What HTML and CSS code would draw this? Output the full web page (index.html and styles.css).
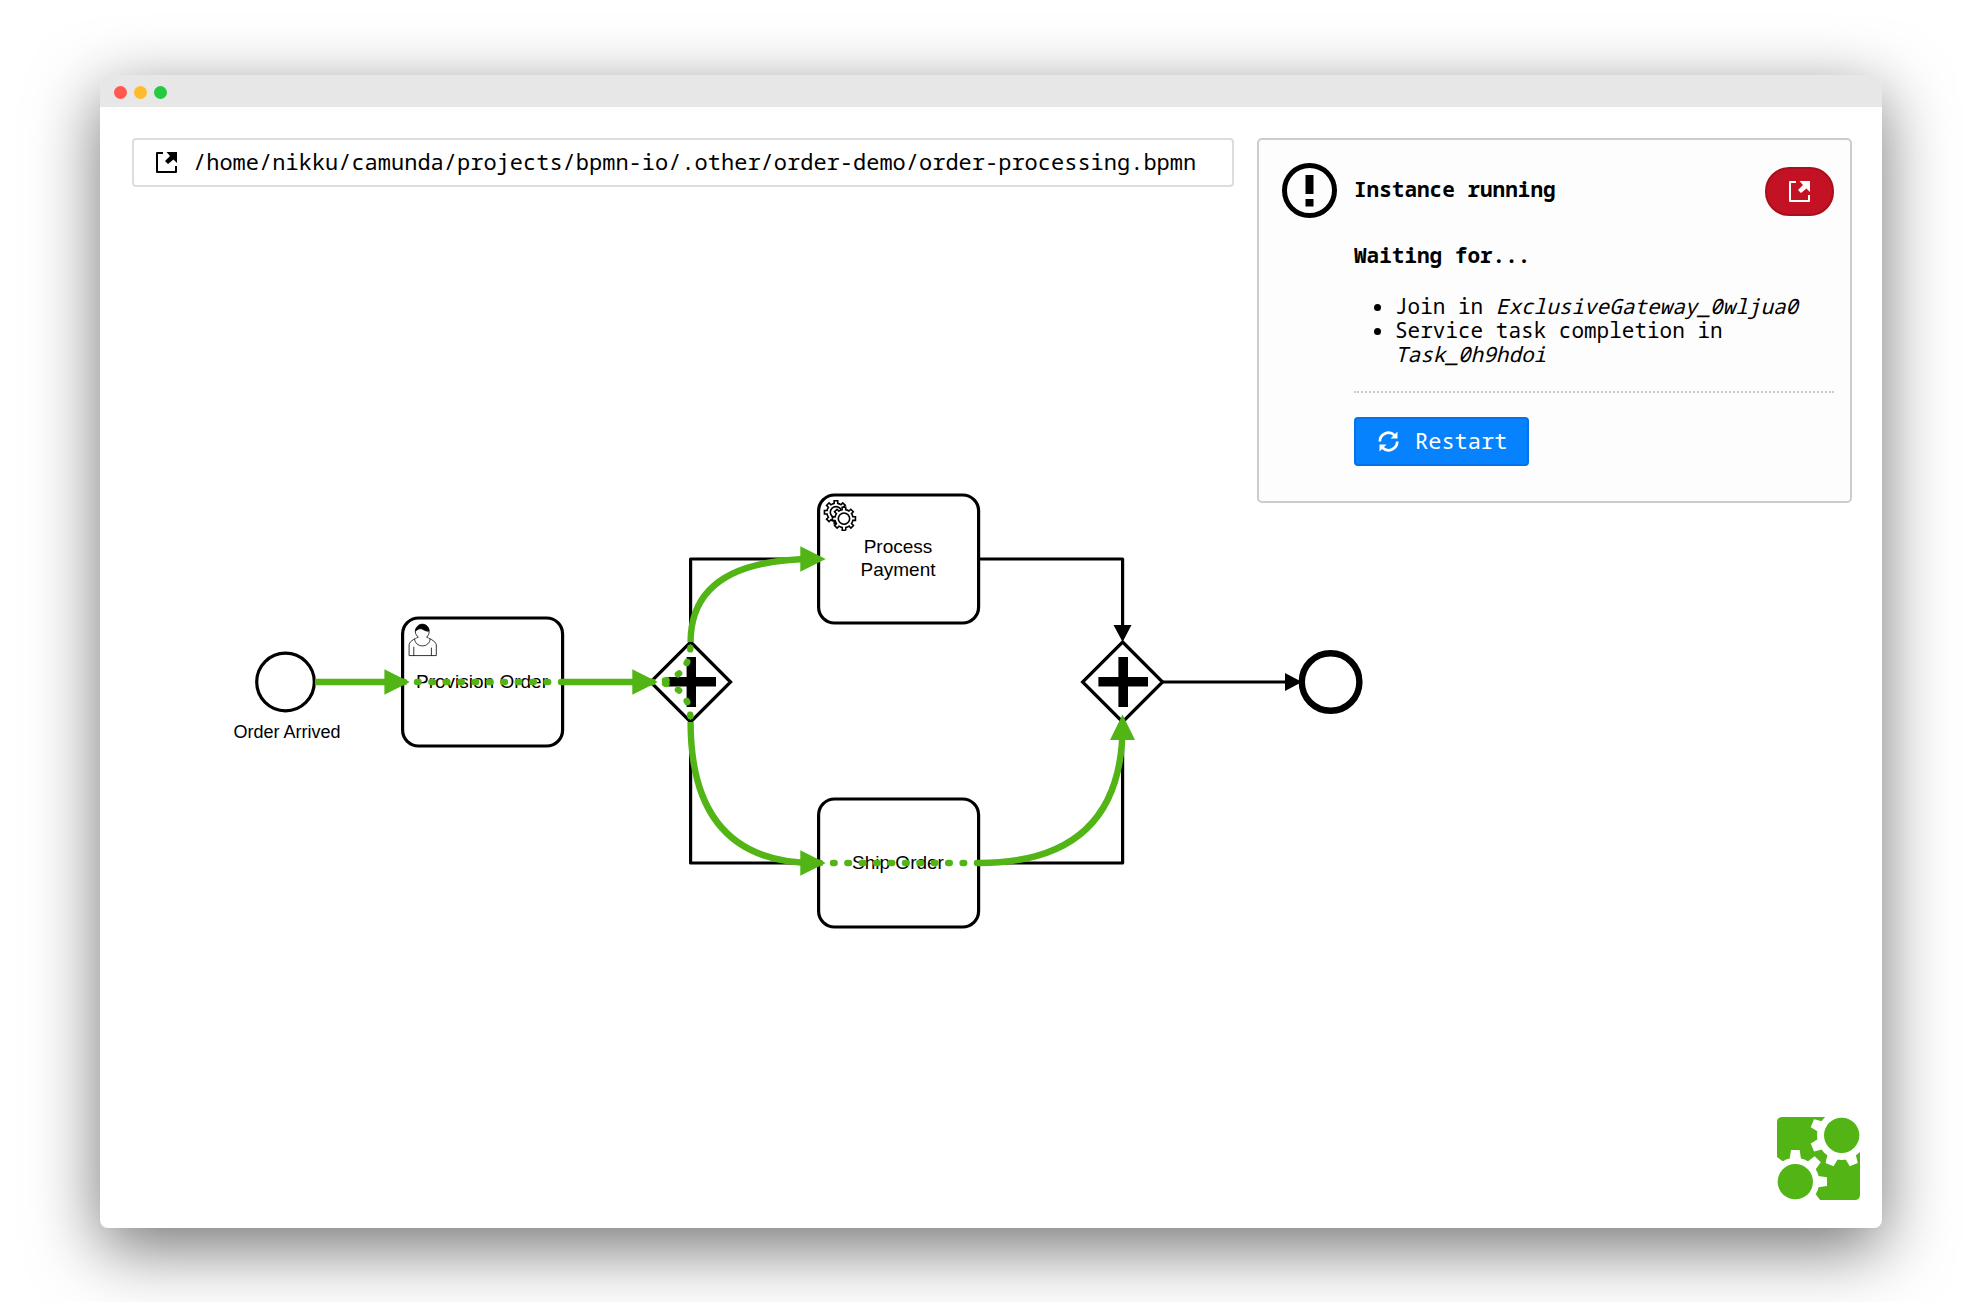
FILE: index.html
```html
<!DOCTYPE html>
<html lang="en">
<head>
<meta charset="utf-8">
<title>Order processing</title>
<link rel="stylesheet" href="styles.css">
</head>
<body>
<svg class="defs" aria-hidden="true">
  <symbol id="external" viewBox="0 0 21 21">
    <path d="M7 1H1V20H20V14" fill="none" stroke="currentColor" stroke-width="2" stroke-linejoin="round"/>
    <path d="M10.500 0H21V11L17.500 7.500L12 12L9 9L14 4Z" fill="currentColor"/>
  </symbol>
</svg>
<div class="window">
  <header class="titlebar">
    <span class="dot close"></span><span class="dot minimize"></span><span class="dot maximize"></span>
  </header>
  <main class="workspace">
    <svg class="diagram" viewBox="100 107 1782 1121" preserveAspectRatio="xMinYMin meet" role="img" aria-label="Order process">
      <defs>
        <path id="gear" d="m 12,18 v -1.71335 c 0.352326,-0.0705 0.703932,-0.17838 1.047628,-0.32133 0.344416,-0.14465 0.665822,-0.32133 0.966377,-0.52145 l 1.19431,1.18005 1.567487,-1.57688 -1.195028,-1.18014 c 0.403376,-0.61394 0.683079,-1.29908 0.825447,-2.01824 l 1.622133,-0.01 v -2.2196 l -1.636514,0.01 c -0.07333,-0.35153 -0.178319,-0.70024 -0.323564,-1.04372 -0.145244,-0.34406 -0.321407,-0.6644 -0.522735,-0.96217 l 1.131035,-1.13631 -1.583305,-1.56293 -1.129598,1.13589 c -0.614052,-0.40108 -1.302883,-0.68093 -2.022633,-0.82247 l 0.0093,-1.61852 h -2.241173 l 0.0042,1.63124 c -0.353763,0.0736 -0.705369,0.17977 -1.049785,0.32371 -0.344415,0.14437 -0.665102,0.32092 -0.9635006,0.52046 l -1.1698628,-1.15823 -1.5667691,1.5792 1.1684265,1.15669 c -0.4026573,0.61283 -0.68308,1.29797 -0.8247287,2.01713 l -1.6588041,0.003 v 2.22174 l 1.6724648,-0.006 c 0.073327,0.35077 0.1797598,0.70243 0.3242851,1.04472 0.1452428,0.34448 0.3214064,0.6644 0.5227339,0.96066 l -1.1993431,1.19723 1.5840256,1.56011 1.1964668,-1.19348 c 0.6140517,0.40346 1.3028827,0.68232 2.0233517,0.82331 l 7.19e-4,1.69892 h 2.226848 z m 0.221462,-3.9957 c -1.788948,0.7502 -3.8576,-0.0928 -4.6097055,-1.87438 -0.7521065,-1.78321 0.090598,-3.84627 1.8802645,-4.59604 1.78823,-0.74936 3.856881,0.0929 4.608987,1.87437 0.752106,1.78165 -0.0906,3.84612 -1.879546,4.59605 z"/>
      </defs>

      <g class="shape">
        <circle cx="285.500" cy="682" r="28.800"/>
        <rect x="402.600" y="618" width="160" height="128" rx="16"/>
        <rect x="818.600" y="495" width="160" height="128" rx="16"/>
        <rect x="818.600" y="799" width="160" height="128" rx="16"/>
        <path d="M690.600 642L730.600 682L690.600 722L650.600 682Z"/>
        <path d="M1122.600 642L1162.600 682L1122.600 722L1082.600 682Z"/>
        <circle class="end" cx="1330.600" cy="682" r="28.800"/>
      </g>
      <g class="flow">
        <path d="M690.600 642V559H818"/>
        <path d="M690.600 722V863H818"/>
        <path d="M979 559H1122.600V630"/>
        <path d="M979 863H1122.600V722"/>
        <path d="M1163 682H1290"/>
      </g>
      <path d="M1113.500 625H1131.500L1122.600 642ZM1285 673V691L1302 682Z"/>
      <path d="M686.600 657h9.400v20h20v9.600h-20v20.400h-9.400v-20.400h-20v-9.600h20ZM1118.400 657h9.600v20h20v9.600h-20v20.400h-9.600v-20.400h-20v-9.600h20Z"/>

      <g class="marker" transform="translate(402.600 618) scale(1.600)">
        <path d="m 15,12 c 0.909,-0.845 1.594,-2.049 1.594,-3.385 0,-2.554 -1.805,-4.622 -4.357,-4.622 -2.552,0 -4.288,2.068 -4.288,4.622 0,1.348 0.974,2.562 1.896,3.405 -0.529,0.187 -5.669,2.097 -5.794,4.756 v 6.718 h 17 v -6.718 c 0,-2.298 -5.528,-4.595 -6.051,-4.776 z m -8,6 l 0,5.500 m 11,0 l 0,-5"/>
        <path d="m 17.162,13.009 c 0,2.447 -2.158,4.431 -4.821,4.431 -2.663,0 -4.822,-1.981 -4.822,-4.431"/>
        <path class="hair" d="m 8.100,8.200 c 0,0 2.251,-2.358 4.274,-1.177 2.024,1.181 4.221,1.537 4.124,0.965 -0.098,-0.570 -0.117,-3.791 -4.191,-4.136 -3.572,0.272 -4.326,4.348 -4.207,4.348 z"/>
      </g>
      <g class="marker gears" transform="translate(818.600 495) scale(1.600)">
        <use href="#gear"/>
        <circle cx="15.900" cy="14.400" r="4"/>
        <use href="#gear" x="5" y="4"/>
      </g>

      <g class="label">
        <text x="482" y="688">Provision Order</text>
        <text x="898" y="553">Process</text>
        <text x="898" y="576">Payment</text>
        <text x="898" y="869">Ship Order</text>
        <text class="small" x="287" y="738">Order Arrived</text>
      </g>

      <g class="trace">
        <path d="M315 682H390M563 682H638M690.600 642Q690.600 559 815 559M690.600 722Q690.600 863 815 863M979 863Q1122.600 863 1122.600 725"/>
        <path class="dotted" d="M402.600 682H563"/>
        <path class="dotted" d="M818.600 863H979"/>
        <path class="dotted" d="M650.600 682Q690.600 682 690.600 642"/>
        <path class="dotted" d="M650.600 682Q690.600 682 690.600 722"/>
      </g>
      <path class="trace-head" d="M384.400 669.300V694.700L409.800 682ZM632.300 669.300V694.700L657.700 682ZM800.300 546.300V571.700L825.700 559ZM800.300 850.300V875.700L825.700 863ZM1110 740H1135L1122.500 714.600Z"/>
    </svg>

    <div class="overlay">
      <a class="file" href="#"><svg class="icon"><use href="#external"/></svg><span>/home/nikku/camunda/projects/bpmn-io/.other/order-demo/order-processing.bpmn</span></a>

      <section class="panel">
        <svg class="status" viewBox="0 0 55 55" aria-hidden="true">
          <circle cx="27.500" cy="27.500" r="25" fill="none" stroke="currentColor" stroke-width="5"/>
          <path d="M23.500 12H31.500V31H23.500ZM23.500 36H31.500V43.500H23.500Z" fill="currentColor"/>
        </svg>
        <h2>Instance running</h2>
        <button class="button danger" type="button" aria-label="Open instance"><svg class="icon"><use href="#external"/></svg></button>
        <div class="details">
          <h3>Waiting for...</h3>
          <ul>
            <li>Join in <em>ExclusiveGateway_0wljua0</em></li>
            <li>Service task completion in <em>Task_0h9hdoi</em></li>
          </ul>
          <div class="actions">
            <button class="button primary" type="button">
              <svg class="icon" viewBox="0 0 21 21" aria-hidden="true">
                <path d="M1.800 10.500A8.700 8.700 0 0 1 16.500 4.200M19.200 10.500A8.700 8.700 0 0 1 4.500 16.800" fill="none" stroke="currentColor" stroke-width="2.700"/>
                <path d="M19.500 0.500V7.500H12.500ZM1.500 20.500V13.500H8.500Z" fill="currentColor"/>
              </svg>
              <span>Restart</span>
            </button>
          </div>
        </div>
      </section>

      <a class="logo" href="#" aria-label="bpmn.io">
        <svg viewBox="111 111 249 249">
          <defs>
            <path id="tooth" d="M68 -17L95 -13V13L68 17Z"/>
            <clipPath id="tile"><path d="M127 111H305L360 166V344Q360 360 344 360H166L111 305V127Q111 111 127 111Z"/></clipPath>
          </defs>
          <g clip-path="url(#tile)">
            <rect x="111" y="111" width="249" height="249" fill="#52b415"/>
            <g fill="#fff">
              <g transform="translate(305 166)">
                <circle r="74"/>
                <use href="#tooth" transform="rotate(22.500)"/><use href="#tooth" transform="rotate(67.500)"/><use href="#tooth" transform="rotate(112.500)"/><use href="#tooth" transform="rotate(157.500)"/><use href="#tooth" transform="rotate(202.500)"/>
              </g>
              <g transform="translate(166 305)">
                <circle r="72"/>
                <use href="#tooth"/><use href="#tooth" transform="rotate(45)"/><use href="#tooth" transform="rotate(-45)"/><use href="#tooth" transform="rotate(-90)"/><use href="#tooth" transform="rotate(-135)"/>
              </g>
            </g>
          </g>
          <g fill="#52b415"><circle cx="305" cy="166" r="53"/><circle cx="166" cy="305" r="53"/></g>
        </svg>
      </a>
    </div>
  </main>
</div>
</body>
</html>
```
FILE: styles.css
```css
* { box-sizing: border-box; }

body {
  margin: 0;
  padding: 75px 100px 74px;
  min-height: 100vh;
  display: flex;
  background: #fff;
  color: #000;
  font-family: "Noto Sans Mono", "Droid Sans Mono", "DejaVu Sans Mono", monospace;
  font-size: 21px;
  line-height: 24px;
}

.defs { position: absolute; width: 0; height: 0; }

.window {
  flex: 1;
  display: flex;
  flex-direction: column;
  border-radius: 8px;
  overflow: hidden;
  background: #fff;
  box-shadow: 0 20px 68px rgba(0, 0, 0, .55);
}

.titlebar {
  display: flex;
  align-items: center;
  gap: 7px;
  height: 32px;
  padding: 2px 14px 0;
  background: #e7e7e7;
}

.dot { width: 13px; height: 13px; border-radius: 50%; }
.close { background: #ff5a52; }
.minimize { background: #ffbb2e; }
.maximize { background: #26c940; }

.workspace { flex: 1; display: grid; }
.diagram { grid-area: 1 / 1; width: 100%; display: block; }

.overlay {
  grid-area: 1 / 1;
  display: grid;
  grid-template-columns: 1fr minmax(400px, 595px);
  grid-template-rows: auto 1fr;
  column-gap: 23px;
  align-items: start;
  padding: 31px 30px 28px 32px;
  z-index: 1;
}

.icon { width: 21px; height: 21px; flex: none; }

.file {
  display: flex;
  align-items: center;
  gap: 16px;
  min-height: 49px;
  padding: 8px 16px 8px 22px;
  border: 2px solid #ddd;
  border-radius: 4px;
  background: #fff;
  color: inherit;
  font-size: 22px;
  text-decoration: none;
}

.file span, .primary span, h2, h3 { padding-bottom: 3px; }

.panel {
  display: grid;
  grid-template-columns: 55px 1fr auto;
  column-gap: 17px;
  align-items: center;
  padding: 23px 16px 35px 23px;
  border: 2px solid #ccc;
  border-radius: 5px;
  background: #fdfdfd;
}

.status { width: 55px; height: 55px; }

h2, h3 { margin: 0; font-size: 21px; font-weight: bold; }

.details { grid-column: 2 / 4; padding-top: 25px; }

ul { margin: 24px 0 25px; padding-left: 41px; }

.actions { padding-top: 24px; border-top: 2px dotted #ccc; }

.button {
  display: inline-flex;
  align-items: center;
  gap: 16px;
  height: 49px;
  padding: 0 20px 0 22px;
  border: 2px solid;
  border-radius: 4px;
  color: #fff;
  font-family: inherit;
  font-size: 22px;
}

.primary { background: #0782ff; border-color: #0074e8; }
.danger {
  margin-top: 2px;
  padding: 0 22px;
  border-radius: 24px;
  background: #c31224;
  border-color: #a80f1f;
}

.logo { grid-column: 2; justify-self: end; align-self: end; margin-right: -8px; }
.logo svg { display: block; width: 83px; height: 83px; }

.shape { fill: #fff; stroke: #000; stroke-width: 3.2px; }
.end { stroke-width: 6.4px; }
.flow { fill: none; stroke: #000; stroke-width: 3.2px; stroke-linejoin: round; }
.marker { fill: #fff; stroke: #000; stroke-width: .5px; }
.gears { stroke-width: 1px; }
.gears circle { stroke: none; }
.hair { fill: #000; }

.label { font-family: "Liberation Sans", Arial, sans-serif; font-size: 19px; text-anchor: middle; }
.small { font-size: 18px; }

.trace { fill: none; stroke: #52b415; stroke-width: 6.4px; }
.dotted { stroke-linecap: round; stroke-dasharray: 1.6 12.8; }
.trace-head { fill: #52b415; }
```
